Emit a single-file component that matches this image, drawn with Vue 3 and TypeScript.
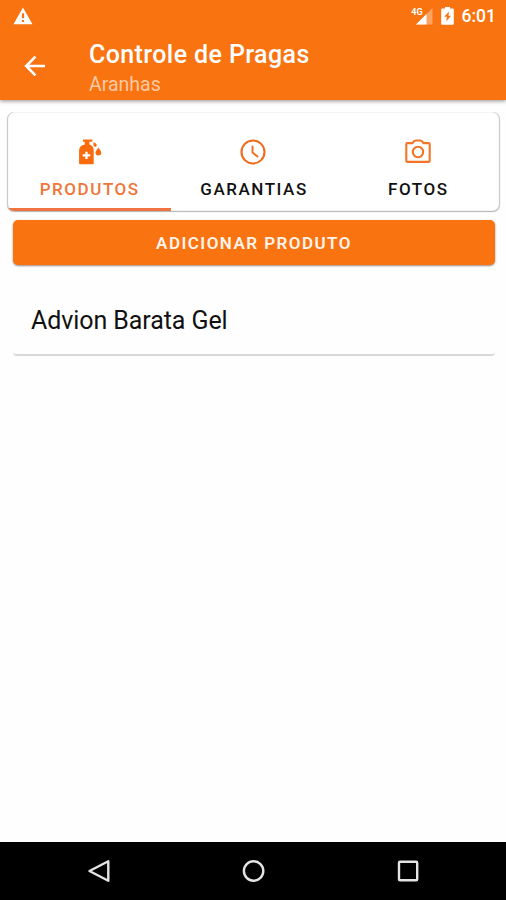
<script setup lang="ts">
import { ref } from 'vue'

interface Tab {
  id: string
  label: string
}

const tabs: Tab[] = [
  { id: 'produtos', label: 'PRODUTOS' },
  { id: 'garantias', label: 'GARANTIAS' },
  { id: 'fotos', label: 'FOTOS' },
]
const active = ref('produtos')
const products: string[] = ['Advion Barata Gel']
</script>

<template>
  <div class="screen">
    <header class="top">
      <div class="status">
        <svg class="warn" width="20" height="18" viewBox="0 0 20 18">
          <path fill="#fff" fill-rule="evenodd" d="M10 0.5 19.5 17.2H0.5zM8.9 6.2v5h2.2v-5zM8.9 13v2.1h2.2V13z" />
        </svg>
        <div class="indicators">
          <span class="network">4G</span>
          <svg class="signal" width="18" height="17" viewBox="0 0 18 17">
            <path fill="#fff" fill-opacity=".35" d="M17.500 0v16.500H1z" />
            <path fill="#fff" d="M11.500 6v10.500H1z" />
          </svg>
          <svg class="battery" width="13" height="18" viewBox="0 0 13 18">
            <path fill="#fff" fill-rule="evenodd" d="M4 0h5v1.500h2.500c.8 0 1.300.5 1.300 1.300v13.600c0 .8-.5 1.300-1.300 1.300h-10c-.8 0-1.300-.5-1.300-1.300V2.800c0-.8.5-1.300 1.300-1.300H4zM8 4.500 3.200 9.800h2.700l-.6 4.700 4.700-5.800H7.500z" />
          </svg>
          <span class="time">6:01</span>
        </div>
      </div>
      <div class="appbar">
        <button class="back" aria-label="Voltar">
          <svg width="34" height="34" viewBox="0 0 34 34">
            <path fill="none" stroke="#fff" stroke-width="2.600" d="M27 17H9M17.400 7.600 8.200 17l9.200 9.400" />
          </svg>
        </button>
        <div class="titles">
          <h1>Controle de Pragas</h1>
          <p>Aranhas</p>
        </div>
      </div>
    </header>

    <main class="content">
      <nav class="tabs">
        <button v-for="tab in tabs" :key="tab.id" class="tab" :class="{ active: tab.id === active }" @click="active = tab.id">
          <svg v-if="tab.id === 'produtos'" class="icon" width="30" height="30" viewBox="0 0 30 30">
            <path fill="#f96b0c" fill-rule="evenodd" d="M9 2.400h9.400v2.300h-3v2.900c2.600.7 4.300 2.900 4.300 5.700v13.200c0 .5-.3.700-.7.700H5.800c-.4 0-.7-.2-.7-.7V13.300c0-2.800 2.200-5 5.600-5.700V4.700H9zM11.300 14.800v2.500H8.700v2.300h2.600v2.500h2.300v-2.500h2.600v-2.300h-2.600v-2.500z" />
            <path fill="#f96b0c" d="M19.600 5.200c1.800.7 3.100 1.400 3.100 2.900a1.600 1.600 0 0 1-3.200.2c-.2-1.100-.1-2.200.1-3.100zM24.400 10.400c1.400 2 2.900 3.600 2.900 5.200a2.900 2.900 0 0 1-5.800 0c0-1.600 1.500-3.200 2.900-5.200z" />
          </svg>
          <svg v-else-if="tab.id === 'garantias'" class="icon" width="30" height="30" viewBox="0 0 30 30" fill="none" stroke="#f06a20">
            <circle cx="15" cy="15" r="11.500" stroke-width="2.100" />
            <path stroke-width="1.900" stroke-linecap="round" stroke-linejoin="round" d="M14.500 9.500v6l5 4" />
          </svg>
          <svg v-else class="icon" width="30" height="30" viewBox="0 0 30 30" fill="none" stroke="#f47428" stroke-width="2.100">
            <path stroke-linejoin="round" d="M4.500 6.100h5c1-1.600 2-2.600 3.200-2.600h4.600c1.200 0 2.200 1 3.200 2.600h5c.8 0 1.200.4 1.200 1.200v16.400c0 .8-.4 1.200-1.200 1.200h-21c-.8 0-1.200-.4-1.200-1.200V7.300c0-.8.400-1.200 1.200-1.200z" />
            <circle cx="15" cy="15" r="5.200" />
          </svg>
          <span>{{ tab.label }}</span>
        </button>
      </nav>

      <button class="add">ADICIONAR PRODUTO</button>

      <ul class="list">
        <li v-for="product in products" :key="product">{{ product }}</li>
      </ul>
    </main>

    <footer class="navbar">
      <svg width="26" height="26" viewBox="0 0 26 26"><path d="M22.300 3.200v19.600L3.500 13z" /></svg>
      <svg width="26" height="26" viewBox="0 0 26 26"><circle cx="12.600" cy="13" r="9.700" /></svg>
      <svg width="26" height="26" viewBox="0 0 26 26"><rect x="4" y="3.800" width="18.200" height="18.400" rx="1" /></svg>
    </footer>
  </div>
</template>

<style>
body {
  background: #fff;
}
</style>

<style scoped>
.screen {
  display: flex;
  flex-direction: column;
  height: 900px;
  font-family: Roboto, sans-serif;
  background: #fefefe;
}
button {
  border: 0;
  padding: 0;
  margin: 0;
  background: none;
  font: inherit;
}
.top {
  height: 100px;
  flex: none;
  background: #fa7311;
  color: #fff;
  box-shadow: 0 1px 4px rgba(50, 30, 40, 0.5);
}
.status {
  display: flex;
  justify-content: space-between;
  height: 33px;
  padding: 0 10px 0 13px;
}
.warn {
  margin-top: 7px;
}
.indicators {
  display: flex;
  align-items: flex-start;
}
.network {
  margin: 7px -8px 0 0;
  font-size: 9px;
  line-height: 10px;
  font-weight: 700;
}
.signal {
  margin: 8px 8px 0 0;
}
.battery {
  margin: 7px 8px 0 0;
}
.time {
  margin-top: 6px;
  font-size: 17.500px;
  line-height: 21px;
  font-weight: 500;
}
.appbar {
  display: flex;
  height: 67px;
}
.back {
  width: 34px;
  height: 34px;
  margin: 16px 37px 0 18px;
}
.back svg {
  display: block;
}
.titles h1 {
  margin: 7px 0 0;
  font-size: 25px;
  line-height: 30px;
  font-weight: 500;
  letter-spacing: 0.400px;
  white-space: nowrap;
}
.titles p {
  margin: 2px 0 0;
  font-size: 19.500px;
  line-height: 25px;
  color: #ffc9a4;
}
.content {
  flex: 1;
  padding: 12px 6px 0 7px;
}
.tabs {
  display: flex;
  height: 99px;
  border-radius: 7px;
  background: #fff;
  overflow: hidden;
  box-shadow: inset 1px 0 1px #c4c4c4, inset -1px 0 1px #c4c4c4, 0 1px 1px #b4b4b4;
}
.tab {
  flex: 1 1 0;
  display: flex;
  flex-direction: column;
  align-items: center;
  padding-top: 25px;
  color: #111;
  font-size: 17px;
  line-height: 22px;
  font-weight: 500;
  letter-spacing: 1.550px;
}
.tab span {
  margin: 11px -1px 0 0;
}
.tab.active {
  color: #f07538;
  box-shadow: inset 0 -3px #ef7441;
}
.icon {
  flex: none;
}
.add {
  display: block;
  width: calc(100% - 11px);
  height: 45px;
  margin: 9px 5px 0 6px;
  border-radius: 5px;
  background: #fa7311;
  color: #fff4ec;
  font-size: 17px;
  font-weight: 600;
  letter-spacing: 1.450px;
  box-shadow: 0 1px 2px rgba(60, 20, 0, 0.500);
}
.list {
  list-style: none;
  margin: 20px 5px 0 6px;
  padding: 0;
}
.list li {
  height: 69px;
  padding-left: 18px;
  border-bottom: 2px solid #d8d8d8;
  border-radius: 4px;
  color: #111;
  font-size: 25px;
  line-height: 72px;
  letter-spacing: -0.080px;
}
.navbar {
  display: flex;
  justify-content: space-between;
  align-items: center;
  height: 58px;
  flex: none;
  box-sizing: border-box;
  padding: 0 85px 0 86px;
  background: #000;
}
.navbar svg {
  fill: none;
  stroke: #e4e4e4;
  stroke-width: 2.400;
  stroke-linejoin: round;
}
</style>
